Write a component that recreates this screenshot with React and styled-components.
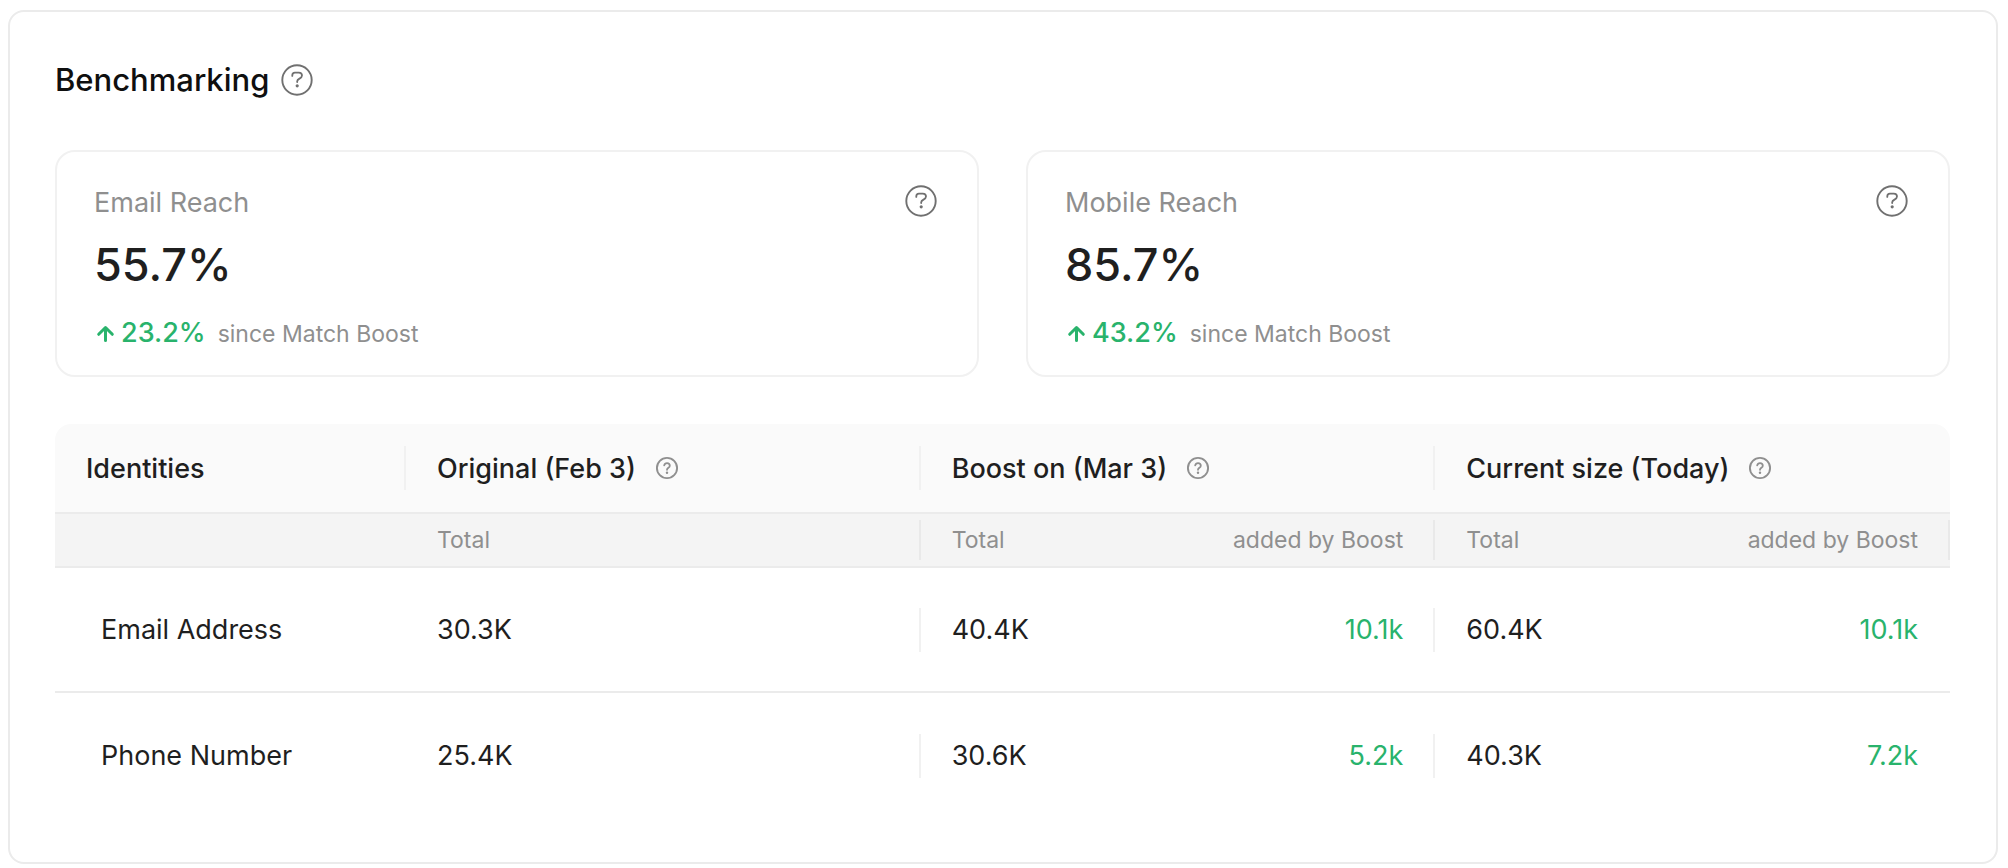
import React from "react";
import styled, { createGlobalStyle, ThemeProvider } from "styled-components";

const theme = {
  text: "#1f1f1f",
  muted: "#8f8f8f",
  green: "#29b36c",
  line: "#ebebeb",
  cardLine: "#f1f1f1",
  fontsm: "23px",
  fontmd: "27px",
  fontlg: "31px",
  fontxl: "45px",
};

const GlobalStyle = createGlobalStyle`
  *, *::before, *::after {
    box-sizing: border-box;
  }
  body {
    margin: 0;
    background: #fff;
    font-family: Inter, "Liberation Sans", sans-serif;
    color: ${(props) => props.theme.text};
  }
`;

const Panel = styled.section`
  margin: 10px 10px 4px 8px;
  padding: 46px 46px 44px 45px;
  border: 2px solid ${(props) => props.theme.line};
  border-radius: 16px;
`;

const PanelHeader = styled.header`
  display: flex;
  align-items: center;
  gap: 12px;
  height: 44px;
  margin-bottom: 48px;
`;

const Title = styled.h1`
  margin: 0;
  font-size: ${(props) => props.theme.fontlg};
  line-height: 44px;
  font-weight: 500;
  color: #0f0f0f;
`;

const HelpButton = styled.button`
  display: inline-flex;
  flex: none;
  padding: 0;
  border: 0;
  background: none;
  color: ${(props) => (props.$light ? "#8f8f8f" : "#707070")};
  cursor: pointer;
`;

const Cards = styled.div`
  display: grid;
  grid-template-columns: 1fr 1fr;
  gap: 47px;
  margin-bottom: 47px;
`;

const Card = styled.article`
  display: flex;
  justify-content: space-between;
  align-items: flex-start;
  padding: 33px 40px 17px 37px;
  border: 2px solid ${(props) => props.theme.cardLine};
  border-radius: 20px;
`;

const Label = styled.h2`
  margin: 0;
  font-size: ${(props) => props.theme.fontmd};
  line-height: 36px;
  font-weight: 400;
  color: ${(props) => props.theme.muted};
`;

const Value = styled.p`
  margin: 12px 0;
  font-size: ${(props) => props.theme.fontxl};
  line-height: 64px;
  font-weight: 500;
`;

const Change = styled.p`
  display: flex;
  align-items: baseline;
  margin: 0;
  font-size: ${(props) => props.theme.fontsm};
  line-height: 48px;
  color: ${(props) => props.theme.muted};
`;

const Delta = styled.span`
  margin: 0 12px 0 5px;
  font-size: ${(props) => props.theme.fontmd};
  font-weight: 500;
  color: ${(props) => props.theme.green};
`;

const Table = styled.table`
  width: 100%;
  table-layout: fixed;
  border-collapse: separate;
  border-spacing: 0;
`;

const FirstCol = styled.col`
  width: 351px;
`;

const Cell = styled.td`
  height: 125px;
  padding: 0;
  border-bottom: ${(props) => (props.$last ? "0" : `2px solid ${props.theme.line}`)};
  font-size: ${(props) => props.theme.fontmd};
  font-weight: 400;
  text-align: ${(props) => (props.$right ? "right" : "left")};
  color: ${(props) => (props.$right ? props.theme.green : props.theme.text)};
`;

const HeadCell = styled(Cell)`
  height: 90px;
  font-weight: 500;
  background: #fafafa;

  &:first-child {
    border-top-left-radius: 16px;
  }
  &:last-child {
    border-top-right-radius: 16px;
  }
`;

const SubCell = styled(Cell)`
  height: 54px;
  font-size: ${(props) => props.theme.fontsm};
  color: ${(props) => props.theme.muted};
  background: #f4f4f4;
`;

const CellContent = styled.div`
  display: flex;
  align-items: center;
  justify-content: ${(props) => (props.$right ? "flex-end" : "flex-start")};
  gap: 19px;
  height: ${(props) => (props.$short ? "40px" : "44px")};
  padding: 0 30px 0 ${(props) => (props.$indent ? "46px" : "31px")};
  border-right: 2px solid
    ${(props) => (!props.$divider ? "transparent" : props.$short ? "#e9e9e9" : "#f1f1f1")};
`;

const HelpIcon = () => (
  <svg width="32" height="32" viewBox="0 0 32 32" fill="none" aria-hidden="true">
    <circle cx="16" cy="16" r="14.7" stroke="currentColor" strokeWidth="1.9" />
    <path
      d="M11.3 11.9V11.2C11.3 9.7 12.4 8.6 13.9 8.6H17.8C19.7 8.6 21 9.8 21 11.6C21 14.9 16.2 14.4 16.2 17.3V18"
      stroke="currentColor"
      strokeWidth="1.8"
      strokeLinecap="round"
    />
    <circle cx="16.2" cy="21.8" r="1.6" fill="currentColor" />
  </svg>
);

const SmallHelpIcon = () => (
  <svg width="24" height="24" viewBox="0 0 24 24" fill="none" aria-hidden="true">
    <circle cx="12" cy="12" r="10.1" stroke="currentColor" strokeWidth="1.9" />
    <path
      d="M9.2 9.4C9.5 8 10.6 7.1 12 7.1C13.6 7.1 14.8 8.2 14.8 9.7C14.8 11.8 12 11.8 12 13.8"
      stroke="currentColor"
      strokeWidth="1.8"
      strokeLinecap="round"
    />
    <circle cx="12" cy="16.8" r="1.2" fill="currentColor" />
  </svg>
);

const ArrowUp = () => (
  <svg width="22" height="18" viewBox="0 0 22 18" fill="none" aria-hidden="true">
    <path
      d="M11.5 16.5V4M4.7 10.3L11.5 3.5L18.3 10.3"
      stroke="#29b36c"
      strokeWidth="3"
      strokeLinecap="round"
      strokeLinejoin="round"
    />
  </svg>
);

const ReachCard = ({ label, value, delta }) => {
  return (
    <Card>
      <div>
        <Label>{label}</Label>
        <Value>{value}</Value>
        <Change>
          <ArrowUp />
          <Delta>{delta}</Delta>
          since Match Boost
        </Change>
      </div>
      <HelpButton aria-label={`About ${label}`}>
        <HelpIcon />
      </HelpButton>
    </Card>
  );
};

const HeadContent = ({ children, divider }) => (
  <CellContent $divider={divider}>
    {children}
    <HelpButton $light aria-label={`About ${children}`}>
      <SmallHelpIcon />
    </HelpButton>
  </CellContent>
);

const rows = [
  { name: "Email Address", original: "30.3K", boost: "40.4K", boostAdded: "10.1k", current: "60.4K", currentAdded: "10.1k" },
  { name: "Phone Number", original: "25.4K", boost: "30.6K", boostAdded: "5.2k", current: "40.3K", currentAdded: "7.2k" },
];

const IdentityTable = () => {
  return (
    <Table>
      <colgroup>
        <FirstCol />
        <col span="6" />
      </colgroup>
      <thead>
        <tr>
          <HeadCell as="th" scope="col">
            <CellContent $divider>Identities</CellContent>
          </HeadCell>
          <HeadCell as="th" scope="colgroup" colSpan="2">
            <HeadContent divider>Original (Feb 3)</HeadContent>
          </HeadCell>
          <HeadCell as="th" scope="colgroup" colSpan="2">
            <HeadContent divider>Boost on (Mar 3)</HeadContent>
          </HeadCell>
          <HeadCell as="th" scope="colgroup" colSpan="2">
            <HeadContent>Current size (Today)</HeadContent>
          </HeadCell>
        </tr>
        <tr>
          <SubCell />
          <SubCell as="th" scope="col" colSpan="2">
            <CellContent $short $divider>Total</CellContent>
          </SubCell>
          <SubCell as="th" scope="col">
            <CellContent $short>Total</CellContent>
          </SubCell>
          <SubCell as="th" scope="col">
            <CellContent $short $right $divider>added by Boost</CellContent>
          </SubCell>
          <SubCell as="th" scope="col">
            <CellContent $short>Total</CellContent>
          </SubCell>
          <SubCell as="th" scope="col">
            <CellContent $short $right $divider>added by Boost</CellContent>
          </SubCell>
        </tr>
      </thead>
      <tbody>
        {rows.map((row, i) => {
          const last = i === rows.length - 1;
          return (
            <tr key={row.name}>
              <Cell as="th" scope="row" $last={last}>
                <CellContent $indent>{row.name}</CellContent>
              </Cell>
              <Cell colSpan="2" $last={last}>
                <CellContent $divider>{row.original}</CellContent>
              </Cell>
              <Cell $last={last}>
                <CellContent>{row.boost}</CellContent>
              </Cell>
              <Cell $right $last={last}>
                <CellContent $right $divider>{row.boostAdded}</CellContent>
              </Cell>
              <Cell $last={last}>
                <CellContent>{row.current}</CellContent>
              </Cell>
              <Cell $right $last={last}>
                <CellContent $right>{row.currentAdded}</CellContent>
              </Cell>
            </tr>
          );
        })}
      </tbody>
    </Table>
  );
};

const App = () => {
  return (
    <ThemeProvider theme={theme}>
      <GlobalStyle />
      <Panel>
        <PanelHeader>
          <Title>Benchmarking</Title>
          <HelpButton aria-label="About Benchmarking">
            <HelpIcon />
          </HelpButton>
        </PanelHeader>
        <Cards>
          <ReachCard label="Email Reach" value="55.7%" delta="23.2%" />
          <ReachCard label="Mobile Reach" value="85.7%" delta="43.2%" />
        </Cards>
        <IdentityTable />
      </Panel>
    </ThemeProvider>
  );
};

export default App;
